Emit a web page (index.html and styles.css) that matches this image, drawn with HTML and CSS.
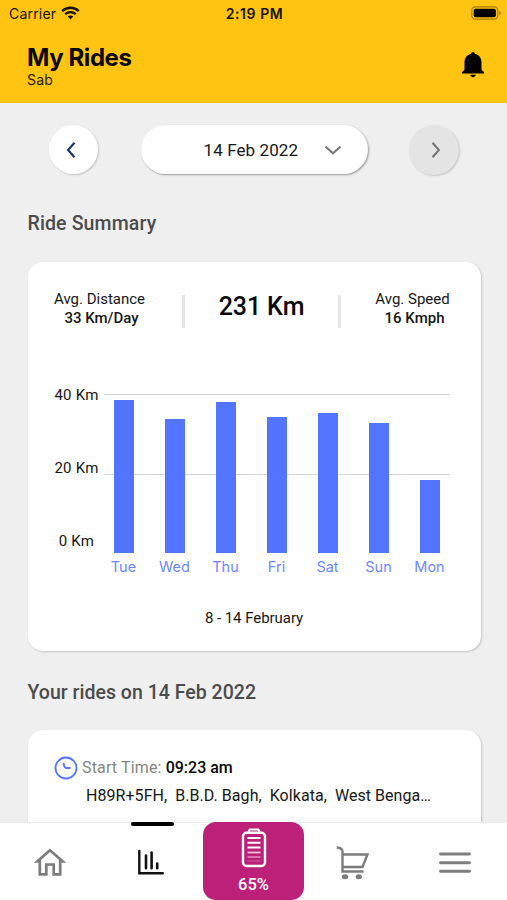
FILE: index.html
```
<!DOCTYPE html>
<html lang="en">
<head>
<meta charset="utf-8">
<title>My Rides</title>
<link rel="stylesheet" href="styles.css">
</head>
<body>
<div class="app">
  <header class="header">
    <div class="status">
      <div class="carrier"><span>Carrier</span>
        <svg width="19" height="14" viewBox="0 0 19 14" fill="none" stroke="#161200" stroke-width="2.3"><path d="M1.2 5.1C5.8.6 13.2.6 17.8 5.1"/><path d="M4.2 8.2c3-2.9 7.6-2.9 10.6 0"/><path d="M6.7 10.5c1.6-1.4 4-1.4 5.6 0L9.5 13.5z" fill="#161200" stroke="none"/></svg>
      </div>
      <div class="time">2:19 PM</div>
      <div class="battery"><svg width="31" height="14" viewBox="0 0 31 14"><rect x=".8" y=".8" width="26" height="12.4" rx="3.6" fill="none" stroke="#a67e09" stroke-width="1.2"/><rect x="2.7" y="2.7" width="22.2" height="8.6" rx="2" fill="#000"/><path d="M28.3 4.8c2.2.9 2.2 3.5 0 4.4z" fill="#a67e09"/></svg></div>
    </div>
    <div class="titlebar">
      <div><h1 class="title">My Rides</h1><div class="subtitle">Sab</div></div>
      <svg class="bell" width="24" height="28" viewBox="0 0 24 28"><path d="M12 1c1 0 1.700.7 1.700 1.800 4.400.9 6.800 4.500 6.800 8.700v7.300l2.600 2.400v1.300H.9v-1.300l2.600-2.400v-7.300c0-4.200 2.400-7.800 6.800-8.700C10.300 1.700 11 1 12 1z"/><path d="M9.300 23.800h5.400c-.2 3.100-5.200 3.100-5.400 0z"/></svg>
    </div>
  </header>

  <main class="content">
    <div class="datebar">
      <div class="round"><svg width="12" height="18" viewBox="0 0 12 18"><path d="M9.500 1.800 3.100 9l6.400 7.200" fill="none" stroke="#153572" stroke-width="2.100"/></svg></div>
      <div class="pill"><span class="date">14 Feb 2022</span><svg width="18" height="10" viewBox="0 0 18 10"><path d="m1.500 1.500 7.500 6.800 7.500-6.800" fill="none" stroke="#777" stroke-width="2"/></svg></div>
      <div class="round off"><svg width="12" height="18" viewBox="0 0 12 18"><path d="m2.500 1.800 6.400 7.200-6.400 7.200" fill="none" stroke="#777" stroke-width="2.100"/></svg></div>
    </div>

    <h2 class="heading summary">Ride Summary</h2>
    <section class="card stats">
      <div class="metrics">
        <div class="metric distance"><div class="label">Avg. Distance</div><div class="value">33 Km/Day</div></div>
        <div class="total">231 Km</div>
        <div class="metric speed"><div class="label">Avg. Speed</div><div class="value">16 Kmph</div></div>
      </div>
      <div class="chart">
        <div class="axis"><span>40 Km</span><span>20 Km</span><span>0 Km</span></div>
        <div class="graph">
          <div class="plot">
            <div class="bar" style="height:152.500px"></div>
            <div class="bar" style="height:133.500px"></div>
            <div class="bar" style="height:151px"></div>
            <div class="bar" style="height:135.500px"></div>
            <div class="bar" style="height:140px"></div>
            <div class="bar" style="height:129.500px"></div>
            <div class="bar" style="height:73px"></div>
          </div>
          <div class="days"><span>Tue</span><span>Wed</span><span>Thu</span><span>Fri</span><span>Sat</span><span>Sun</span><span>Mon</span></div>
        </div>
      </div>
      <div class="range">8 - 14 February</div>
    </section>

    <h2 class="heading rides">Your rides on 14 Feb 2022</h2>
    <section class="card ride">
      <div class="start">
        <svg width="24" height="24" viewBox="0 0 24 24" fill="none" stroke="#5274ff"><circle cx="12" cy="12" r="10.500" stroke-width="1.800"/><path d="M9.500 6.800c.3 2.800 1 4.500 2.200 5 1 .4 2.700.2 4.800.2" stroke-width="1.900"/></svg>
        <span class="start-label">Start Time:</span><span class="start-time">09:23 am</span>
      </div>
      <div class="place">H89R+5FH,&nbsp; B.B.D. Bagh,&nbsp; Kolkata,&nbsp; West Benga…</div>
    </section>
  </main>

  <nav class="nav">
    <div class="tab home"><svg width="32" height="30" viewBox="0 0 32 30"><path d="M3.200 13.500 16 2.200l12.800 11.300h-2.600v12.800h-6.500v-9.800h-7.400v9.800H5.800V13.500z" fill="none" stroke="#7c7c7c" stroke-width="2.700"/></svg></div>
    <div class="tab active"><svg width="30" height="28" viewBox="0 0 30 28" fill="none" stroke="#111" stroke-linecap="round"><path d="M3.300 3v22.300h23.500" stroke-width="2.400"/><path d="M10 7.500v12.800M15.600 4.500v15.800M21.200 15.500v4.800" stroke-width="2.600"/></svg></div>
    <div class="charge">
      <svg width="26" height="40" viewBox="0 0 26 40" fill="none" stroke="#fff"><rect x="2" y="4.700" width="22" height="33.300" rx="3.500" stroke-width="2.400"/><path d="M7.500 4 8.700 1.500h8.600L18.500 4" stroke-width="2.200" stroke-linejoin="round"/><path d="M6.500 10h13M6.500 14.800h13M6.500 19.500h13" stroke-width="2"/><path d="M6.500 24.500h13" stroke-width="1.700" opacity=".75"/><path d="M6.500 29h13" stroke-width="1.500" opacity=".5"/><path d="M6.500 33h13" stroke-width="1.300" opacity=".2"/></svg>
      <span>65%</span>
    </div>
    <div class="tab cart"><svg width="34" height="36" viewBox="0 0 34 36" fill="none" stroke="#7c7c7c" stroke-width="2.400"><path d="M.7 1.500c3.500.3 5.800 1 5.800 4V25.500h21"/><path d="M7 8.500h24.500L26.500 21H7"/><ellipse cx="9" cy="30.800" rx="3.200" ry="2.500" fill="#7c7c7c" stroke="none"/><ellipse cx="22.800" cy="30.800" rx="3.200" ry="2.500" fill="#7c7c7c" stroke="none"/></svg></div>
    <div class="tab menu"><svg width="32" height="22" viewBox="0 0 32 22"><path d="M1.500 2h29M1.500 10.700h29M1.500 19.300h29" stroke="#7f7f7f" stroke-width="2.900" stroke-linecap="round"/></svg></div>
  </nav>
</div>
</body>
</html>
```

FILE: styles.css
```
* { box-sizing: border-box; }
body { margin: 0; background: #efefef; color: #161616; font-family: Roboto, sans-serif; }
h1, h2 { margin: 0; }
svg { display: block; flex: none; }
.app { width: 507px; height: 900px; display: flex; flex-direction: column; overflow: hidden; }

.header { flex: none; height: 103.400px; background: #ffc411; font-family: Inter, sans-serif; }
.status { display: grid; grid-template-columns: 1fr auto 1fr; align-items: center; height: 27px; padding: 0 5px 0 9px; color: #161200; }
.carrier { display: flex; align-items: center; gap: 5px; font-size: 14px; }
.carrier span { letter-spacing: 0.200px; }
.carrier svg { margin-top: -1px; }
.time { font-size: 14px; font-weight: 600; letter-spacing: 0.550px; margin-right: 2px; }
.battery { justify-self: end; margin-top: -1px; }
.titlebar { display: flex; justify-content: space-between; padding: 16px 22px 0 27px; }
.title { font-size: 24px; line-height: 30px; font-weight: 700; color: #0c0900; letter-spacing: -0.420px; }
.subtitle { font-size: 14px; line-height: 17px; margin-top: -2px; color: #1f1800; letter-spacing: 0.200px; }
.bell { margin-top: 8px; }

.content { flex: 1; min-height: 0; overflow: hidden; padding: 21.600px 26px 0 27.500px; }
.datebar { display: flex; justify-content: space-between; align-items: center; height: 50px; padding: 0 22px 0 21.500px; }
.round { display: flex; align-items: center; justify-content: center; width: 49px; height: 49px; padding-right: 5px; border-radius: 50%; background: #fff; box-shadow: 1px 1px 2px #c4c4c4; }
.round.off { width: 50px; height: 50px; padding: 0 0 0 4px; background: #e4e4e4; }
.pill { display: flex; align-items: center; width: 227px; height: 49px; margin-left: 1px; padding-left: 63px; gap: 25px; border-radius: 25px; background: #fff; box-shadow: 1px 1px 2px #999; }
.date { font-size: 17px; width: 95px; white-space: nowrap; letter-spacing: 0.100px; }

.heading { font-weight: 500; font-size: 19.500px; line-height: 24px; color: #4b4b4b; }
.summary { margin-top: 37px; letter-spacing: 0.130px; }
.rides { margin-top: 30px; letter-spacing: 0.020px; }
.card { background: #fff; border-radius: 15px; box-shadow: 1px 1px 2px #c2c2c2; }
.stats { height: 389px; margin-top: 26px; padding: 28px 31px 0 26.500px; }

.metrics { display: flex; height: 38px; }
.metric { font-size: 15px; line-height: 19px; text-align: center; white-space: nowrap; }
.value { font-weight: 500; padding-left: 4px; }
.distance { width: 91px; }
.total { flex: none; width: 159px; height: 33px; margin: 5px 34px 0 37px; border: solid #e6e6e6; border-width: 0 3px; font-size: 25px; line-height: 23px; font-weight: 500; letter-spacing: -0.100px; text-align: center; color: #080808; }
.speed { flex: none; width: 75px; }

.chart { display: flex; height: 184px; margin-top: 63px; }
.axis { display: flex; flex-direction: column; width: 50px; font-size: 15px; line-height: 17px; gap: 56px; margin-top: -4px; white-space: nowrap; letter-spacing: 0.250px; }
.axis span { width: 45px; text-align: center; }
.graph { width: 346px; padding-top: 3px; }
.plot { display: flex; align-items: flex-end; gap: 30.500px; height: 159px; padding-left: 9.500px; background: linear-gradient(#d2d4d5, #d2d4d5) 0 0 / 100% 1px no-repeat, linear-gradient(#d2d4d5, #d2d4d5) 0 80px / 100% 1px no-repeat; }
.bar { flex: none; width: 20.500px; background: #5274ff; }
.days { display: flex; height: 20px; margin-top: 4px; margin-left: -6px; font: 14.500px/20px Inter, sans-serif; color: #6b87ff; }
.days span { flex: none; width: 51px; text-align: center; }
.range { margin-top: 34px; padding-left: 4px; font-size: 15px; line-height: 18px; letter-spacing: -0.050px; text-align: center; }

.ride { height: 190px; margin-top: 25px; padding: 26px 26px 0 26.500px; }
.start { display: flex; align-items: center; height: 24px; font-size: 16px; white-space: nowrap; }
.start-label { color: #858585; margin-left: 4px; letter-spacing: 0.150px; }
.start-time { font-weight: 500; margin-left: 4px; color: #080808; }
.place { margin-top: 6px; padding-left: 32px; font-size: 16px; line-height: 20px; letter-spacing: 0.050px; white-space: nowrap; }

.nav { flex: none; display: grid; grid-template-columns: 101px 102px 101px 101px 102px; height: 78px; background: #fff; border-top: 1px solid #e9e9e9; }
.tab { display: flex; justify-content: center; padding-top: 25px; }
.home { padding-right: 1px; }
.active { padding: 0; flex-direction: column; justify-content: flex-start; align-items: center; gap: 22px; margin-top: -1px; }
.active::before { content: ""; width: 43px; height: 4px; border-radius: 2px; background: #000; }
.active svg { margin-right: 3px; }
.charge { display: flex; flex-direction: column; align-items: center; height: 78px; margin-top: -1px; padding-top: 6px; border-radius: 13px; background: #bd2078; color: #fff; }
.charge span { margin-top: 7px; font-size: 16.500px; line-height: 20px; font-weight: 500; }
.cart { padding: 23px 4px 0 0; }
.menu { padding: 29px 2px 0 0; }
```
